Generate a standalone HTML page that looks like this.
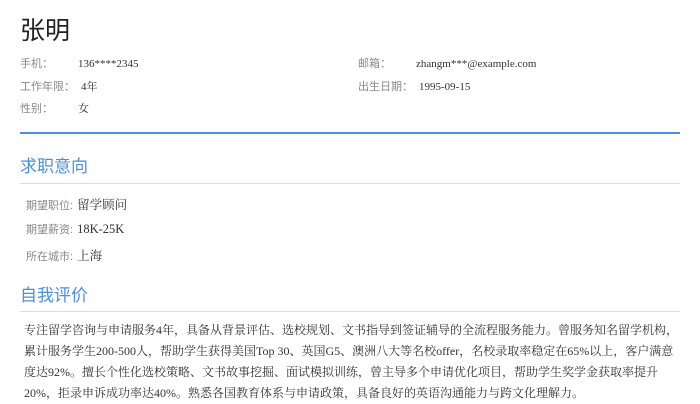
<!DOCTYPE html>
<html><head><meta charset="utf-8"><style>
body{margin:0;width:700px;height:400px;background:#fff;overflow:hidden;font-family:"Liberation Serif","Noto Serif CJK SC",serif;color:#333;position:relative}
.a{position:absolute;white-space:nowrap}
.sans{font-family:"Liberation Sans","Noto Sans CJK SC",sans-serif}
.lab{color:#888;font-size:11px;font-family:"Liberation Sans","Noto Sans CJK SC",sans-serif}
.val{font-size:11px;color:#333}
.l2{color:#888;font-size:11px;font-family:"Liberation Sans","Noto Sans CJK SC",sans-serif}
.v2{font-size:12.5px;color:#333}
.h{color:#4a90e2;font-size:17px;font-family:"Liberation Sans","Noto Sans CJK SC",sans-serif}
</style></head><body>
<div class="a sans" style="left:20px;top:14px;font-size:25px;color:#222;line-height:34px">张明</div>
<div class="a lab" style="left:20px;top:56px;line-height:16px">手机：</div><div class="a val" style="left:78px;top:56px;line-height:16px">136****2345</div>
<div class="a lab" style="left:20px;top:79px;line-height:16px">工作年限：</div><div class="a val" style="left:81px;top:79px;line-height:16px">4年</div>
<div class="a lab" style="left:20px;top:101px;line-height:16px">性别：</div><div class="a val" style="left:78px;top:101px;line-height:16px">女</div>
<div class="a lab" style="left:358px;top:56px;line-height:16px">邮箱：</div><div class="a val" style="left:416px;top:56px;line-height:16px">zhangm***@example.com</div>
<div class="a lab" style="left:358px;top:79px;line-height:16px">出生日期：</div><div class="a val" style="left:419px;top:79px;line-height:16px">1995-09-15</div>
<div class="a" style="left:20px;top:132px;width:660px;height:2px;background:#4a90e2"></div>
<div class="a h" style="left:20px;top:155px;line-height:24px">求职意向</div>
<div class="a" style="left:20px;top:183px;width:660px;height:1px;background:#ddd"></div>
<div class="a" style="left:26px;top:196px;line-height:17px"><span class="l2">期望职位:</span> <span class="v2">留学顾问</span></div>
<div class="a" style="left:26px;top:220px;line-height:17px"><span class="l2">期望薪资:</span> <span class="v2">18K-25K</span></div>
<div class="a" style="left:26px;top:247px;line-height:17px"><span class="l2">所在城市:</span> <span class="v2">上海</span></div>
<div class="a h" style="left:20px;top:284px;line-height:24px">自我评价</div>
<div class="a" style="left:20px;top:311px;width:660px;height:1px;background:#ddd"></div>
<div class="a" style="left:24px;top:320px;font-size:12px;line-height:21px;color:#333">专注留学咨询与申请服务4年，具备从背景评估、选校规划、文书指导到签证辅导的全流程服务能力。曾服务知名留学机构，<br>累计服务学生200-500人，帮助学生获得美国Top 30、英国G5、澳洲八大等名校offer，名校录取率稳定在65%以上，客户满意<br>度达92%。擅长个性化选校策略、文书故事挖掘、面试模拟训练，曾主导多个申请优化项目，帮助学生奖学金获取率提升<br>20%，拒录申诉成功率达40%。熟悉各国教育体系与申请政策，具备良好的英语沟通能力与跨文化理解力。</div>
</body></html>
